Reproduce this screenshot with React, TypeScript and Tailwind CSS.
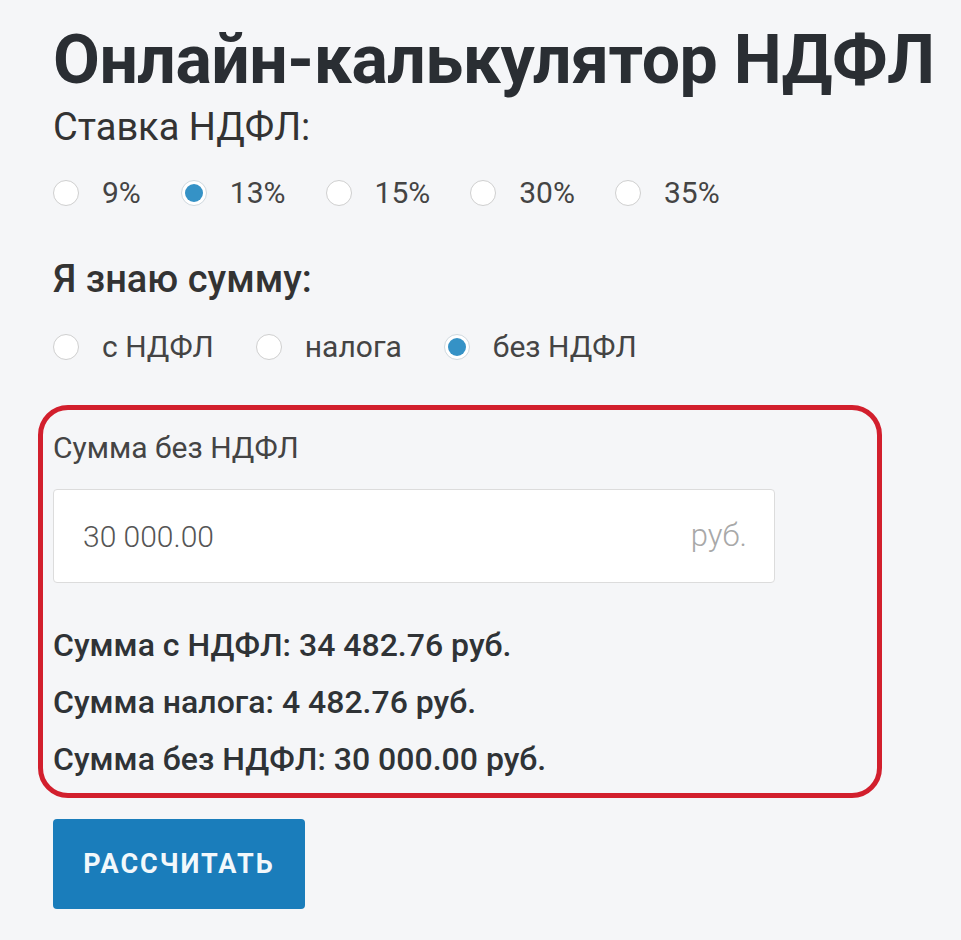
import { useState } from "react";

const rates = ["9%", "13%", "15%", "30%", "35%"];
const modes = ["с НДФЛ", "налога", "без НДФЛ"];

function Radio({ checked }: { checked: boolean }) {
    return checked ? (
        <span className="flex h-[26px] w-[26px] shrink-0 items-center justify-center rounded-full border border-[#cfd8de] bg-white">
            <span className="h-[18px] w-[18px] rounded-full bg-[#3592c6]" />
        </span>
    ) : (
        <span className="h-[26px] w-[26px] shrink-0 rounded-full border border-[#cfcfcf] bg-white" />
    );
}

export default function App() {
    const [rate, setRate] = useState("13%");
    const [mode, setMode] = useState("без НДФЛ");

    return (
        <div
            className="min-h-[940px] bg-[#f5f6f8] pl-[53px] pt-[28px] text-[#333]"
            style={{ fontFamily: "Roboto, 'Noto Sans', sans-serif" }}
        >
            <h1 className="text-[68px] font-bold leading-[64px] tracking-[-0.5px] text-[#2a2e33]">
                Онлайн-калькулятор НДФЛ
            </h1>

            <div className="mt-[15px] text-[38px] leading-[40px]">Ставка НДФЛ:</div>
            <div className="mt-[31px] flex h-[30px] items-center">
                {rates.map((r) => (
                    <label
                        key={r}
                        onClick={() => setRate(r)}
                        className="mr-[40px] flex cursor-pointer items-center gap-[23px] text-[30px] leading-[30px] text-[#444]"
                    >
                        <Radio checked={rate === r} />
                        <span>{r}</span>
                    </label>
                ))}
            </div>

            <div className="mt-[51px] text-[38px] font-medium leading-[40px]">Я знаю сумму:</div>
            <div className="mt-[33px] flex h-[30px] items-center">
                {modes.map((m) => (
                    <label
                        key={m}
                        onClick={() => setMode(m)}
                        className="mr-[42px] flex cursor-pointer items-center gap-[23px] text-[30px] leading-[30px] text-[#444]"
                    >
                        <Radio checked={mode === m} />
                        <span>{m}</span>
                    </label>
                ))}
            </div>

            {/* highlighted result block */}
            <div className="-ml-[15px] mt-[43px] w-[844px] rounded-[30px] border-[5px] border-[#d21f2d] pb-[19px] pl-[10px] pt-[23px]">
                <div className="text-[30px] leading-[30px] text-[#444]">Сумма без НДФЛ</div>
                <div className="mt-[26px] flex h-[94px] w-[722px] items-center justify-between rounded-[4px] border border-[#dcdcdc] bg-white pl-[29px] pr-[27px]">
                    <span className="text-[30px] font-light text-[#555]">30 000.00</span>
                    <span className="text-[31px] font-light text-[#a8a8a8]">руб.</span>
                </div>
                <div className="mt-[47px] space-y-[27px] text-[32px] font-medium leading-[30px] text-[#2f3336]">
                    <div>Сумма с НДФЛ: 34 482.76 руб.</div>
                    <div>Сумма налога: 4 482.76 руб.</div>
                    <div>Сумма без НДФЛ: 30 000.00 руб.</div>
                </div>
            </div>

            <button className="mt-[21px] h-[90px] w-[252px] rounded-[4px] bg-[#1a7dbb] text-[27px] font-bold tracking-[2px] text-[#f2f8fb]">
                РАССЧИТАТЬ
            </button>
        </div>
    );
}
